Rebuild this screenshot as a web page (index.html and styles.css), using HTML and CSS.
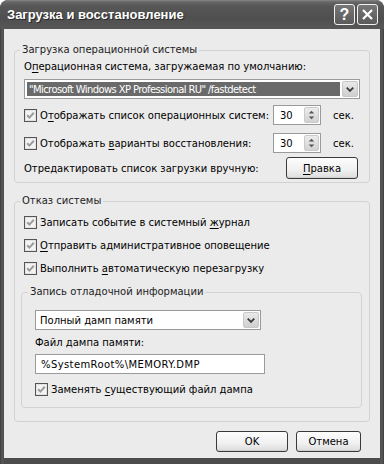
FILE: index.html
```html
<!DOCTYPE html>
<html lang="ru">
<head>
<meta charset="utf-8">
<title>Загрузка и восстановление</title>
<link rel="stylesheet" href="styles.css">
</head>
<body>
<svg class="defs" width="0" height="0" aria-hidden="true">
  <defs>
    <symbol id="chk" viewBox="0 0 13 13">
      <rect x="0.5" y="0.5" width="12" height="12" fill="#f3f3f3" stroke="#555"/>
      <rect x="1.5" y="1.5" width="10" height="10" fill="none" stroke="#e2e2e2"/>
      <path d="M3.2 6.2 L5.4 8.6 L9.8 3.8" fill="none" stroke="#9c9c9c" stroke-width="2"/>
    </symbol>
    <symbol id="chev" viewBox="0 0 15 16">
      <path d="M4 6.5 L7.5 10 L11 6.5" fill="none" stroke="#3c3c3c" stroke-width="2"/>
    </symbol>
    <symbol id="updn" viewBox="0 0 14 16">
      <path d="M4 6.5 L7 3.5 L10 6.5 Z M4 9.5 L7 12.5 L10 9.5 Z" fill="#555"/>
    </symbol>
  </defs>
</svg>
<div class="window">
  <div class="titlebar">
    <span class="title">Загрузка и восстановление</span>
    <div class="tbtns">
      <span class="tbtn">?</span>
      <span class="tbtn">
        <svg width="13" height="13" viewBox="0 0 13 13"><path d="M2 2 L11 11 M11 2 L2 11" stroke="#fff" stroke-width="2.2"/></svg>
      </span>
    </div>
  </div>
  <div class="client">
    <fieldset class="group g1">
      <legend>Загрузка операционной системы</legend>
      <div class="gbody">
        <div class="lbl">О<u>п</u>ерационная система, загружаемая по умолчанию:</div>
        <div class="combo wide">
          <span class="combo-val sel">"Microsoft Windows XP Professional RU" /fastdetect</span>
          <span class="combo-btn"><svg width="15" height="16"><use href="#chev"/></svg></span>
        </div>
        <div class="row r1">
          <svg class="cb" width="13" height="13"><use href="#chk"/></svg>
          <span class="txt">О<u>т</u>ображать список операционных систем:</span>
          <div class="spin"><span class="spin-val">30</span><span class="spin-btn"><svg width="14" height="16"><use href="#updn"/></svg></span></div>
          <span class="sec">сек.</span>
        </div>
        <div class="row r2">
          <svg class="cb" width="13" height="13"><use href="#chk"/></svg>
          <span class="txt">Отображать <u>в</u>арианты восстановления:</span>
          <div class="spin"><span class="spin-val">30</span><span class="spin-btn"><svg width="14" height="16"><use href="#updn"/></svg></span></div>
          <span class="sec">сек.</span>
        </div>
        <div class="row r3">
          <span class="txt">Отредактировать список загрузки вручную:</span>
          <span class="btn edit"><u>П</u>равка</span>
        </div>
      </div>
    </fieldset>

    <fieldset class="group g2">
      <legend>Отказ системы</legend>
      <div class="gbody">
        <div class="row crow">
          <svg class="cb" width="13" height="13"><use href="#chk"/></svg>
          <span class="txt">Записать событие в системный <u>ж</u>урнал</span>
        </div>
        <div class="row crow">
          <svg class="cb" width="13" height="13"><use href="#chk"/></svg>
          <span class="txt"><u>О</u>тправить административное оповещение</span>
        </div>
        <div class="row crow">
          <svg class="cb" width="13" height="13"><use href="#chk"/></svg>
          <span class="txt">Выполнить <u>а</u>втоматическую перезагрузку</span>
        </div>

        <fieldset class="group inner">
          <legend>Запись отладочной информации</legend>
          <div class="ibody">
            <div class="combo dump">
              <span class="combo-val">Полный дамп памяти</span>
              <span class="combo-btn"><svg width="15" height="16"><use href="#chev"/></svg></span>
            </div>
            <div class="lbl flbl">Файл дампа памяти:</div>
            <div class="input">%SystemRoot%\MEMORY.DMP</div>
            <div class="row crow irow">
              <svg class="cb" width="13" height="13"><use href="#chk"/></svg>
              <span class="txt">Заменять <u>с</u>уществующий файл дампа</span>
            </div>
          </div>
        </fieldset>
      </div>
    </fieldset>

    <div class="buttons">
      <span class="btn ok">OK</span>
      <span class="btn cancel">Отмена</span>
    </div>
  </div>
</div>
</body>
</html>
```

FILE: styles.css
```css
* { box-sizing: border-box; }

html, body {
  margin: 0;
  padding: 0;
  background: #ffffff;
}

body {
  font-family: "DejaVu Sans", "Liberation Sans", sans-serif;
  font-size: 10px;
  color: #000;
}

.defs { position: absolute; width: 0; height: 0; }

u { text-decoration: underline; text-underline-offset: 2px; }

.window {
  width: 384px;
  height: 464px;
  display: flex;
  flex-direction: column;
  background: linear-gradient(90deg, #3a3a3a 0, #5a5a5a 2px, #4c4c4c 4px, #4c4c4c 380px, #5a5a5a 382px, #3a3a3a 384px);
  border-radius: 8px 8px 0 0;
  overflow: hidden;
}

.titlebar {
  height: 29px;
  flex: 0 0 29px;
  display: flex;
  align-items: center;
  justify-content: space-between;
  padding: 0 6px 0 7px;
  background: linear-gradient(#888 0, #666 2px, #575757 6px, #4f4f4f 18px, #575757 29px);
  border-radius: 8px 8px 0 0;
}

.title {
  color: #fff;
  font-family: "Liberation Sans", Arial, sans-serif;
  font-weight: bold;
  font-size: 13px;
  text-shadow: 1px 1px 0 #2a2a2a;
}

.tbtns { display: flex; gap: 2px; }

.tbtn {
  width: 21px;
  height: 21px;
  border: 1px solid #f2f2f2;
  border-radius: 3px;
  background: linear-gradient(#777, #5a5a5a);
  color: #fff;
  font-family: "Liberation Sans", Arial, sans-serif;
  font-weight: bold;
  font-size: 16px;
  display: flex;
  align-items: center;
  justify-content: center;
  line-height: 1;
}

.client {
  flex: 1;
  margin: 0 4px 6px 4px;
  background: #ebebeb;
  padding: 14px 10px 0 10px;
  display: flex;
  flex-direction: column;
}

.group {
  margin: 0;
  padding: 0;
  min-width: 0;
  border: 1px solid #d2d2d2;
  border-radius: 4px;
}

.group legend {
  margin-left: 5px;
  padding: 0 2px;
  line-height: 14px;
  height: 14px;
  color: #222;
}

.gbody { display: flex; flex-direction: column; }

.g1 .gbody { padding: 3px 9px 3px 9px; }

.lbl { line-height: 14px; height: 14px; white-space: nowrap; }

.combo {
  height: 20px;
  border: 1px solid #9a9a9a;
  background: #fff;
  display: flex;
  align-items: stretch;
  padding: 1px;
}

.combo.wide { margin-top: 5px; }

.combo-val {
  flex: 1;
  display: flex;
  align-items: center;
  padding-left: 3px;
  white-space: nowrap;
  overflow: hidden;
}

.combo-val.sel {
  background: #6a6a6a;
  color: #fff;
  margin: 1px 2px 1px 1px;
  padding-left: 2px;
  letter-spacing: -0.6px;
}

.combo-btn {
  width: 16px;
  border: 1px solid #c8c8c8;
  border-radius: 2px;
  background: linear-gradient(#e9e9e9, #cfcfcf);
  display: flex;
  align-items: center;
  justify-content: center;
}

.row {
  display: flex;
  align-items: center;
  white-space: nowrap;
}

.row .cb { flex: 0 0 13px; margin-right: 3px; }

.r1 { height: 20px; margin-top: 6px; }
.r2 { height: 20px; margin-top: 8px; }
.r3 { height: 22px; margin-top: 4px; }

.row .txt { flex: 1; }

.spin {
  width: 48px;
  height: 20px;
  border: 1px solid #9a9a9a;
  background: #fff;
  display: flex;
  align-items: stretch;
  padding: 1px;
}

.spin-val {
  flex: 1;
  display: flex;
  align-items: center;
  padding-left: 5px;
}

.spin-btn {
  width: 15px;
  border: 1px solid #cacaca;
  border-radius: 2px;
  background: linear-gradient(#ececec, #d2d2d2);
  display: flex;
  align-items: center;
  justify-content: center;
}

.sec { width: 27px; margin-left: 12px; }

.btn {
  display: flex;
  align-items: center;
  justify-content: center;
  border: 1px solid #3a3a3a;
  border-radius: 3px;
  background: linear-gradient(#fdfdfd, #f0f0f0 60%, #dcdcdc);
  box-shadow: inset 0 -1px 0 #cfcfcf;
}

.btn.edit { width: 72px; height: 22px; margin-right: 2px; }

.g2 { margin-top: 11px; }

.g2 .gbody { padding: 6px 7px 13px 6px; }

.crow { height: 16px; padding-left: 3px; }
.crow + .crow { margin-top: 7px; }

.inner { margin-top: 9px; }
.inner legend { margin-left: 6px; }

.ibody {
  display: flex;
  flex-direction: column;
  padding: 11px 0 10px 13px;
}

.combo.dump { width: 226px; }

.flbl { margin-top: 6px; }

.input {
  margin-top: 4px;
  width: 230px;
  height: 20px;
  border: 1px solid #9a9a9a;
  background: #fff;
  display: flex;
  align-items: center;
  padding-left: 5px;
  white-space: nowrap;
  letter-spacing: 0.4px;
}

.irow { margin-top: 7px; padding-left: 0; }

.buttons {
  display: flex;
  justify-content: flex-end;
  gap: 8px;
  margin-top: 9px;
  margin-right: 9px;
}

.btn.ok { width: 72px; height: 21px; }
.btn.cancel { width: 65px; height: 21px; }
```
